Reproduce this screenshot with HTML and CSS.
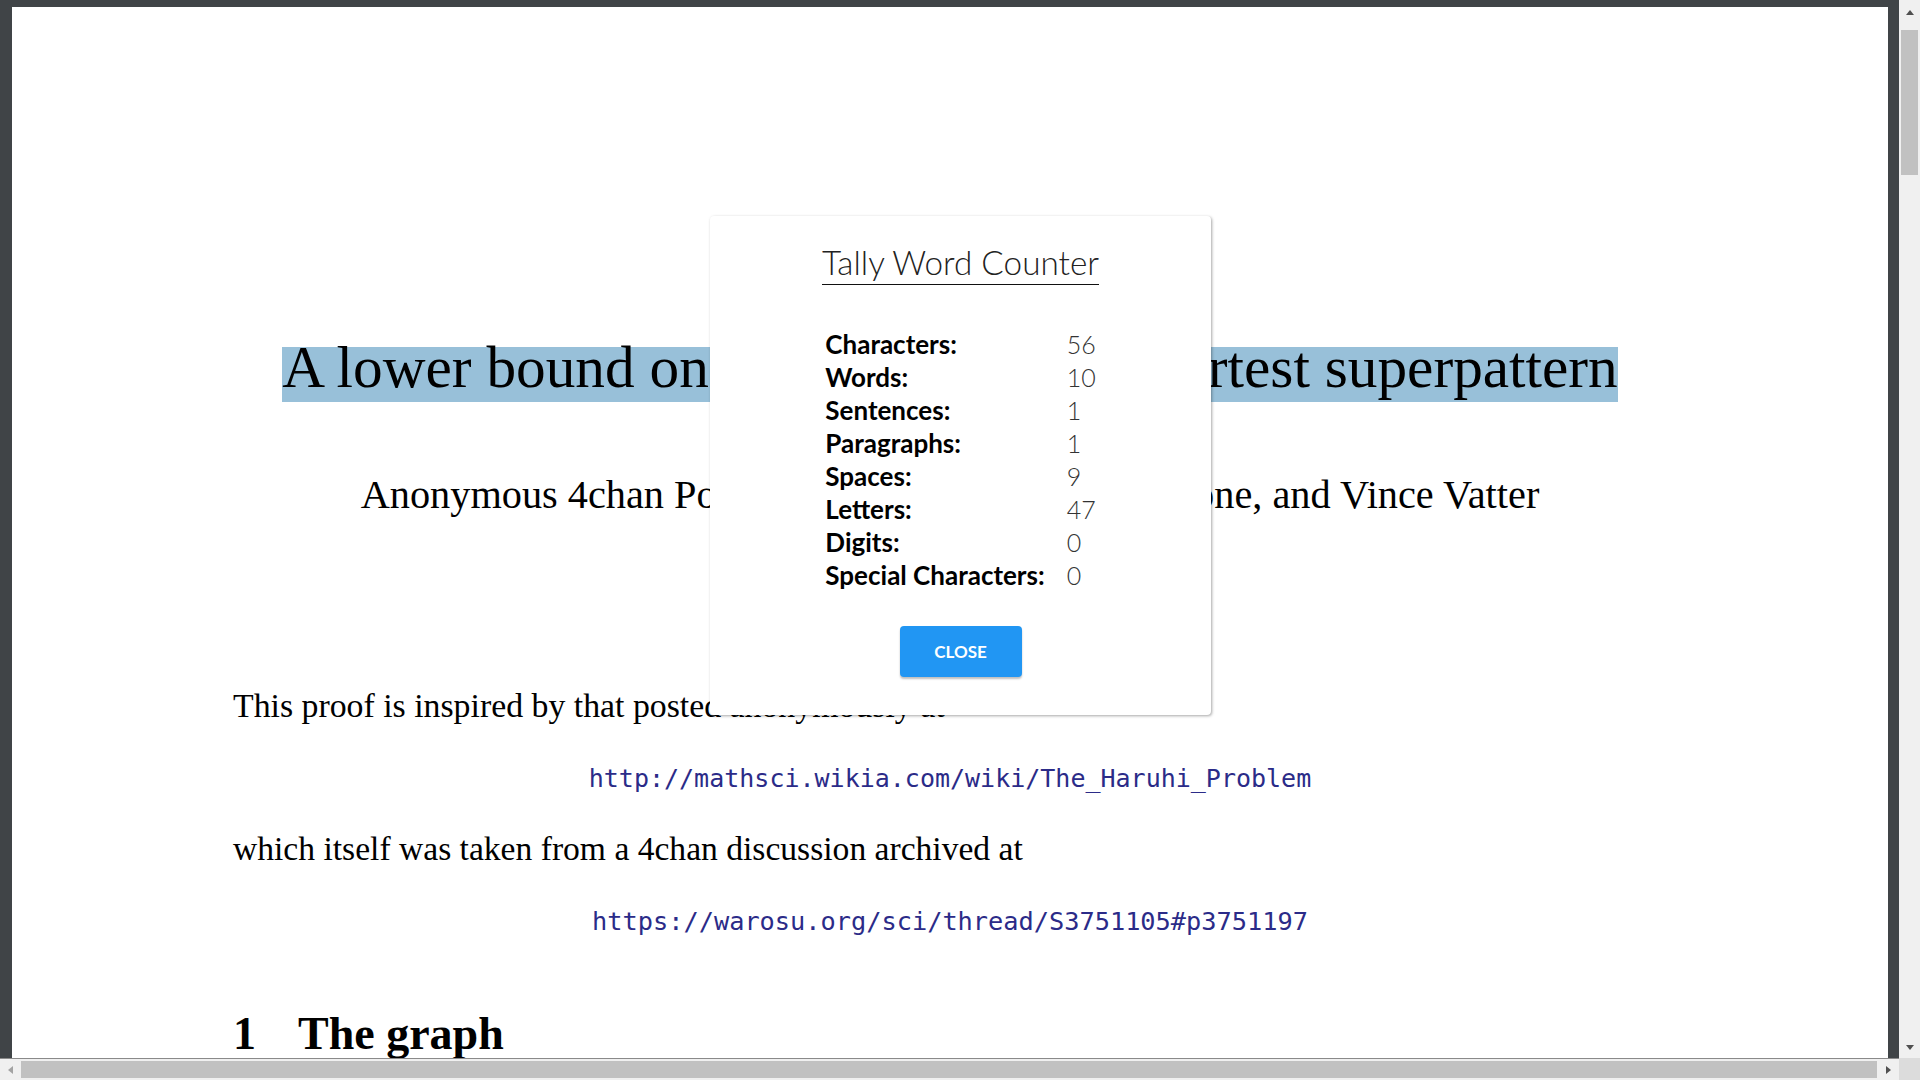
FILE: index.html
```html
<!DOCTYPE html>
<html lang="en">
<head>
<meta charset="utf-8">
<title>A lower bound on the length of the shortest superpattern</title>
<link rel="stylesheet" href="styles.css">
</head>
<body>
<div class="viewer">
  <div class="viewport">
    <div class="page">
      <div class="title-row"><span class="title">A lower bound on the length of the shortest superpattern</span></div>
      <div class="authors">Anonymous 4chan Poster, Robin Houston, Jay Pantone, and Vince Vatter</div>
      <p class="para p1">This proof is inspired by that posted anonymously at</p>
      <p class="url u1">http://mathsci.wikia.com/wiki/The_Haruhi_Problem</p>
      <p class="para p2">which itself was taken from a 4chan discussion archived at</p>
      <p class="url u2">https://warosu.org/sci/thread/S3751105#p3751197</p>
      <h2 class="heading"><span class="num">1</span>The graph</h2>
    </div>
  </div>
  <div class="vscroll">
    <div class="arrow-box"><span class="tri tri-up"></span></div>
    <div class="vthumb"></div>
    <div class="spacer"></div>
    <div class="arrow-box arrow-box-bottom"><span class="tri tri-down"></span></div>
  </div>
  <div class="hscroll">
    <div class="harrow harrow-left"><span class="tri tri-left"></span></div>
    <div class="hthumb"></div>
    <div class="harrow harrow-right"><span class="tri tri-right"></span></div>
  </div>
  <div class="corner"></div>

  <div class="dialog">
    <h1 class="dlg-title">Tally Word Counter</h1>
    <dl class="stats">
      <dt>Characters:</dt><dd>56</dd>
      <dt>Words:</dt><dd>10</dd>
      <dt>Sentences:</dt><dd>1</dd>
      <dt>Paragraphs:</dt><dd>1</dd>
      <dt>Spaces:</dt><dd>9</dd>
      <dt>Letters:</dt><dd>47</dd>
      <dt>Digits:</dt><dd>0</dd>
      <dt>Special Characters:</dt><dd>0</dd>
    </dl>
    <button class="close-btn" type="button">CLOSE</button>
  </div>
</div>
</body>
</html>
```
FILE: styles.css
```css
html, body {
  margin: 0;
  padding: 0;
  width: 1920px;
  height: 1080px;
  overflow: hidden;
}

.viewer {
  position: relative;
  display: grid;
  grid-template-columns: 1899px 21px;
  grid-template-rows: 1058px 22px;
  width: 1920px;
  height: 1080px;
}

.viewport {
  background: #404447;
  padding: 7px 11px 0 12px;
  overflow: hidden;
  box-sizing: border-box;
}

.page {
  background: #fff;
  height: 100%;
  box-sizing: border-box;
  padding: 340px 221px 0;
  font-family: "Liberation Serif", "Times New Roman", serif;
  color: #000;
  overflow: hidden;
}

.title-row {
  display: flex;
  justify-content: center;
}

.title {
  background: #98c0d9;
  font-size: 59.3px;
  line-height: 40px;
  padding-bottom: 15px;
  white-space: nowrap;
}

.authors {
  margin-top: 72.5px;
  text-align: center;
  font-size: 40.3px;
  line-height: 40px;
  white-space: nowrap;
}

.para {
  margin: 0;
  font-size: 33.8px;
  line-height: 40px;
  white-space: nowrap;
}

.url {
  margin: 0;
  font-family: "DejaVu Sans Mono", "Liberation Mono", monospace;
  font-size: 25px;
  line-height: 40px;
  text-align: center;
  color: #2b2b88;
  white-space: nowrap;
}

.p1 { margin-top: 171px; }
.u1 { margin-top: 33.8px; }
.p2 { margin-top: 29.7px; font-size: 33.6px; }
.u2 { margin-top: 33.3px; font-size: 25.3px; }

.heading {
  margin: 67px 0 0;
  font-size: 46px;
  line-height: 50px;
  font-weight: bold;
  white-space: nowrap;
}

.heading .num {
  display: inline-block;
  width: 65px;
}

/* scrollbars */
.vscroll {
  background: #f0f0f0;
  display: flex;
  flex-direction: column;
}

.arrow-box {
  height: 24px;
  display: flex;
  align-items: center;
  justify-content: center;
}

.arrow-box-bottom {
  height: 22px;
}

.vthumb {
  margin: 6px 2px 0;
  height: 145px;
  background: #c1c1c1;
}

.spacer {
  flex: 1;
}

.tri {
  display: block;
  width: 0;
  height: 0;
}

.tri-up {
  border-left: 4px solid transparent;
  border-right: 4px solid transparent;
  border-bottom: 5px solid #505050;
}

.tri-down {
  border-left: 4px solid transparent;
  border-right: 4px solid transparent;
  border-top: 5px solid #505050;
}

.tri-left {
  border-top: 4px solid transparent;
  border-bottom: 4px solid transparent;
  border-right: 5px solid #a3a3a3;
}

.tri-right {
  border-top: 4px solid transparent;
  border-bottom: 4px solid transparent;
  border-left: 5px solid #505050;
}

.hscroll {
  background: #f0f0f0;
  border-top: 1px solid #8a8a8a;
  display: flex;
  align-items: flex-start;
  box-sizing: border-box;
}

.harrow {
  height: 21px;
  display: flex;
  align-items: center;
  justify-content: center;
}

.harrow-left { width: 21px; }
.harrow-right { width: 22px; }

.hthumb {
  margin-top: 2px;
  flex: 1;
  height: 17px;
  background: #c1c1c1;
}

.corner {
  background: #dcdcdc;
}

/* dialog */
.dialog {
  position: absolute;
  left: 710px;
  top: 216px;
  width: 501px;
  height: 499px;
  box-sizing: border-box;
  background: #fff;
  border-radius: 4px;
  box-shadow: 1px 1px 3px rgba(0, 0, 0, 0.35);
  display: flex;
  flex-direction: column;
  align-items: center;
  padding-top: 26px;
  font-family: Lato, "Open Sans", sans-serif;
}

.dlg-title {
  margin: 0;
  font-weight: 300;
  font-size: 33.3px;
  line-height: 40px;
  padding-bottom: 2px;
  border-bottom: 1px solid #111;
  color: #222;
  white-space: nowrap;
}

.stats {
  margin: 42.6px 0 0;
  display: grid;
  grid-template-columns: auto auto;
  column-gap: 22px;
  font-size: 26px;
  line-height: 33px;
}

.stats dt {
  font-weight: 700;
  color: #000;
  white-space: nowrap;
}

.stats dd {
  margin: 0;
  font-weight: 300;
  font-size: 25px;
  color: #333;
}

.close-btn {
  margin-top: 34.4px;
  width: 122px;
  height: 51px;
  border: 0;
  border-radius: 4px;
  background: #2196f3;
  color: #fff;
  font-family: Lato, "Open Sans", sans-serif;
  font-weight: 700;
  font-size: 17px;
  box-shadow: 0 2px 2px rgba(0, 0, 0, 0.25);
  padding: 0;
}
```
